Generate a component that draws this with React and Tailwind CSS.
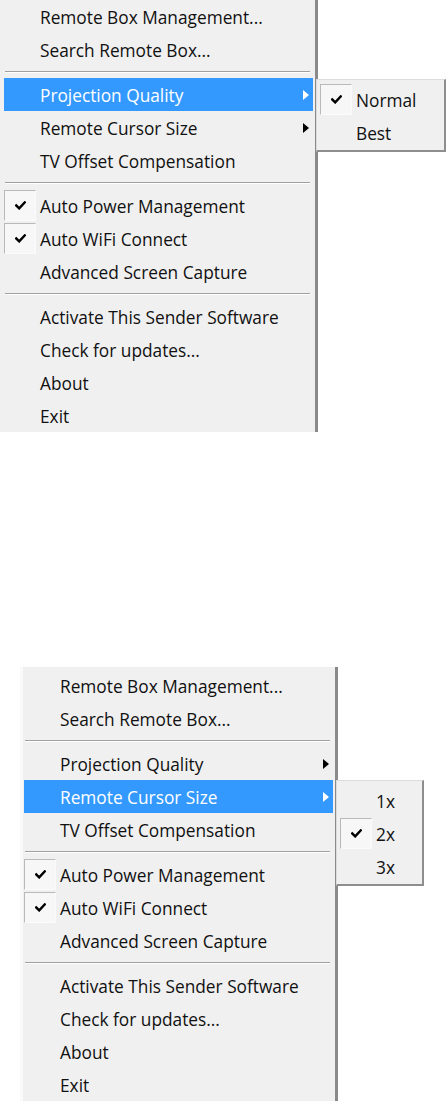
import React from "react";

const Check = () => (
  <svg width="11" height="9" viewBox="0 0 11 9">
    <path d="M1.2 4.4 L4.2 7.4 L9.8 1.4" fill="none" stroke="#000" strokeWidth="2.4" strokeLinecap="square" />
  </svg>
);

const CheckBox = () => (
  <div className="w-[32px] h-[31px] flex items-center justify-center bg-[#f7f7f7] border-t border-l border-t-[#b9b9b9] border-l-[#b9b9b9] border-r border-b border-r-[#fbfbfb] border-b-[#fbfbfb]">
    <Check />
  </div>
);

const Arrow = ({ white }) => (
  <div
    className={
      "w-0 h-0 border-y-[5px] border-y-transparent border-l-[6px] mr-[4px] " +
      (white ? "border-l-white" : "border-l-black")
    }
  />
);

const Item = ({ label, checked, sub, hl, children }) => (
  <div className={"relative h-[33px] flex items-center " + (hl ? "bg-[#3399ff] text-white" : "text-[#111]")}>
    <div className="w-[32px] h-[33px] flex items-center">{checked ? <CheckBox /> : null}</div>
    <div className="pl-[4px] pt-[2px] flex-1 whitespace-nowrap">{label}</div>
    {sub ? <Arrow white={hl} /> : null}
    {children}
  </div>
);

const Sep = () => (
  <div className="h-[12px] flex items-center pl-[1px] pr-[3px]">
    <div className="w-full h-[2px] border-t border-t-[#a0a0a0] border-b border-b-white" />
  </div>
);

const Sub = ({ items, width, left, top }) => (
  <div
    className={
      "absolute z-10 bg-[#f0f0f0] text-[#111] border-t border-l border-t-[#dcdcdc] border-l-[#dcdcdc] border-r-2 border-b-2 border-r-[#8e8e8e] border-b-[#8e8e8e] pt-[3px] pb-[1px] pl-[3px] " +
      width + " " + left + " " + top
    }
  >
    {items.map((it) => (
      <div key={it.label} className="h-[33px] flex items-center">
        <div className="w-[32px] h-[33px] flex items-center">{it.checked ? <CheckBox /> : null}</div>
        <div className="pl-[4px] pt-[2px] whitespace-nowrap">{it.label}</div>
      </div>
    ))}
  </div>
);

const Menu = ({ which, className }) => {
  const sub1 =
    which === 1 ? (
      <Sub
        items={[{ label: "Normal", checked: true }, { label: "Best" }]}
        width="w-[130px]"
        left="left-[312px]"
        top="top-[1px]"
      />
    ) : null;
  const sub2 =
    which === 2 ? (
      <Sub
        items={[{ label: "1x" }, { label: "2x", checked: true }, { label: "3x" }]}
        width="w-[88px]"
        left="left-[312px]"
        top="top-[0px]"
      />
    ) : null;
  return (
    <div className={"w-[318px] bg-[#f0f0f0] border-r-[3px] border-r-[#8a8a8a] pl-[1px] pr-[2px] pt-[2px] " + className}>
      <Item label="Remote Box Management..." />
      <Item label="Search Remote Box..." />
      <Sep />
      <Item label="Projection Quality" sub hl={which === 1}>{sub1}</Item>
      <Item label="Remote Cursor Size" sub hl={which === 2}>{sub2}</Item>
      <Item label="TV Offset Compensation" />
      <Sep />
      <Item label="Auto Power Management" checked />
      <Item label="Auto WiFi Connect" checked />
      <Item label="Advanced Screen Capture" />
      <Sep />
      <Item label="Activate This Sender Software" />
      <Item label="Check for updates..." />
      <Item label="About" />
      <Item label="Exit" />
    </div>
  );
};

export default function App() {
  return (
    <div className="w-[446px] h-[1102px] bg-white overflow-hidden font-['Open_Sans',sans-serif] text-[17.3px] leading-none">
      <Menu which={1} className="mt-[-2px] border-l-[3px] border-l-[#f0f0f0]" />
      <Menu which={2} className="mt-[235px] ml-[20px] border-l-[3px] border-l-[#fafafa]" />
    </div>
  );
}
